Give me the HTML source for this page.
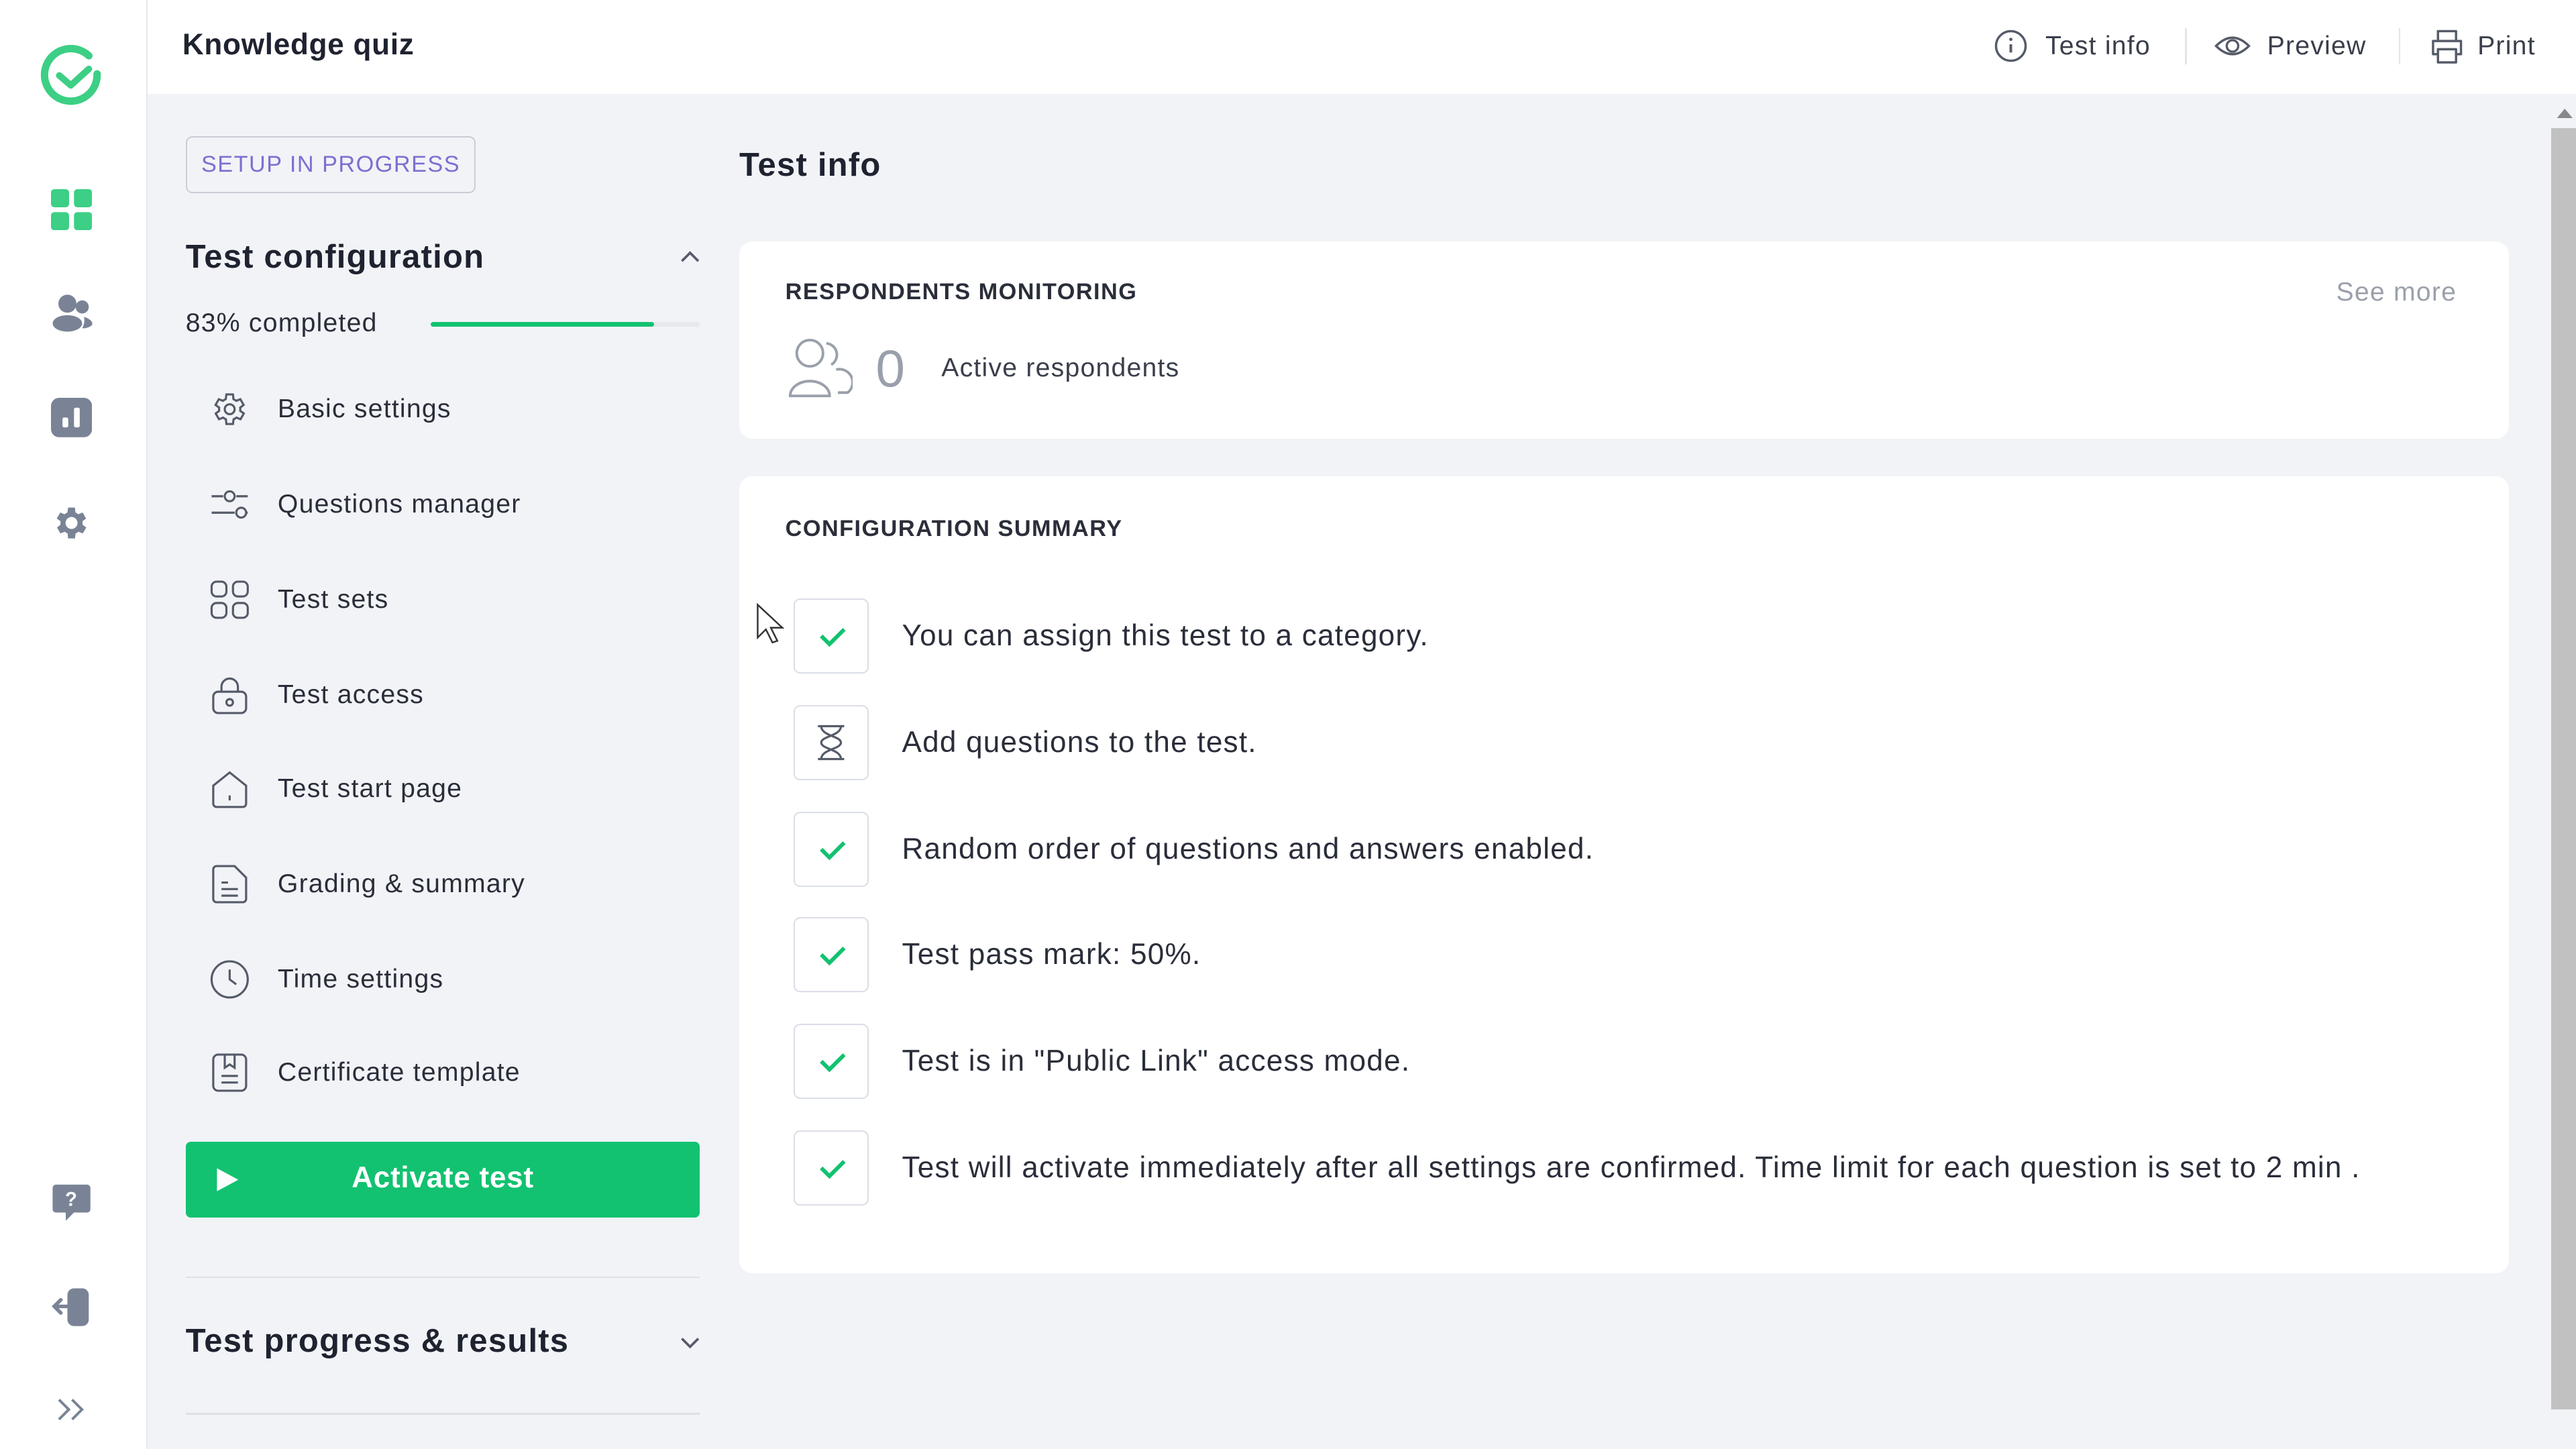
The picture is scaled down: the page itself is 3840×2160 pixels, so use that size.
<!DOCTYPE html>
<html><head><meta charset="utf-8"><style>
html,body{margin:0;padding:0;}
body{width:3840px;height:2159px;overflow:hidden;background:#f1f3f7;font-family:"Liberation Sans",sans-serif;}
#w{width:1568px;height:882px;zoom:2.449;position:relative;background:#f1f3f7;color:#1f2330;letter-spacing:0.5px;}
.a{position:absolute;}
.rail{left:0;top:0;width:89px;height:882px;background:#fff;border-right:1px solid #e6e8ee;}
.top{left:90px;top:0;width:1478px;height:57px;background:#fff;}
.mi{position:absolute;left:169px;font-size:16px;color:#2a2e3a;transform:translateY(-50%);}
.ic{position:absolute;left:128px;width:24px;height:24px;transform:translateY(-50%);}
.card{background:#fff;border-radius:8px;}
.cb{position:absolute;left:483px;width:44px;height:44px;border:1px solid #d9dde5;border-radius:4px;background:#fff;transform:translateY(-50%);}
.rt{position:absolute;left:549px;font-size:18px;color:#2a2e3a;transform:translateY(-50%);white-space:nowrap;}
.h{font-size:14px;font-weight:bold;letter-spacing:0.6px;color:#2a2e3a;}
</style></head><body><div id="w">
<div class="a rail"></div>
<svg class="a" style="left:24px;top:27px" width="40" height="40" viewBox="0 0 40 40"><path d="M30 7 A16 16 0 1 0 35 18" fill="none" stroke="#3dcf85" stroke-width="4.5" stroke-linecap="round"/><path d="M12 19 L19 25 L30 15" fill="none" stroke="#3dcf85" stroke-width="4" stroke-linecap="round" stroke-linejoin="round"/></svg>
<svg class="a" style="left:31px;top:115px" width="25" height="25"><rect x="0" y="0" width="11" height="11" rx="2" fill="#3dcf85"/><rect x="14" y="0" width="11" height="11" rx="2" fill="#3dcf85"/><rect x="0" y="14" width="11" height="11" rx="2" fill="#3dcf85"/><rect x="14" y="14" width="11" height="11" rx="2" fill="#3dcf85"/></svg>
<svg class="a" style="left:31px;top:179px" width="26" height="24"><circle cx="10" cy="6" r="5.5" fill="#7a8396"/><ellipse cx="10" cy="18" rx="9" ry="5" fill="#7a8396"/><circle cx="19" cy="8" r="4" fill="#7a8396"/><path d="M20 14 Q26 16 25 19 Q23 21 19 21 Q21 17 20 14Z" fill="#7a8396"/></svg>
<svg class="a" style="left:31px;top:242px" width="25" height="25"><rect x="0" y="0" width="25" height="24" rx="5" fill="#7a8396"/><rect x="7" y="12" width="3.5" height="6" rx="1" fill="#fff"/><rect x="14" y="6" width="3.5" height="12" rx="1" fill="#fff"/></svg>
<svg class="a" style="left:31px;top:306px" width="25" height="25" viewBox="0 0 24 24"><path fill="#7a8396" d="M19.4 13a7.5 7.5 0 0 0 0-2l2.1-1.6-2-3.5-2.5 1a7 7 0 0 0-1.7-1L15 3h-4l-.4 2.9a7 7 0 0 0-1.7 1l-2.5-1-2 3.5L6.6 11a7.5 7.5 0 0 0 0 2l-2.1 1.6 2 3.5 2.5-1a7 7 0 0 0 1.7 1L11 21h4l.4-2.9a7 7 0 0 0 1.7-1l2.5 1 2-3.5zM13 15.5a3.5 3.5 0 1 1 0-7 3.5 3.5 0 0 1 0 7z" transform="translate(-1 0)"/></svg>
<svg class="a" style="left:31px;top:719px" width="25" height="25"><path d="M3 2h19a2 2 0 0 1 2 2v13a2 2 0 0 1-2 2h-8l-5 5v-5H3a2 2 0 0 1-2-2V4a2 2 0 0 1 2-2z" fill="#7a8396"/><text x="12.5" y="15" font-size="12" font-weight="bold" fill="#fff" text-anchor="middle" font-family="Liberation Sans">?</text></svg>
<svg class="a" style="left:31px;top:783px" width="25" height="25"><rect x="10" y="1" width="13" height="23" rx="4" fill="#7a8396"/><path d="M2 12h12M6 8l-4 4 4 4" stroke="#7a8396" stroke-width="2.2" fill="none" stroke-linecap="round"/></svg>
<svg class="a" style="left:34px;top:851px" width="20" height="14"><path d="M2 1l6 6-6 6M10 1l6 6-6 6" stroke="#7a8396" stroke-width="1.6" fill="none"/></svg>

<div class="a top"></div>
<div class="a" style="left:111px;top:17px;font-size:18px;font-weight:bold;color:#1f2330;letter-spacing:0.3px">Knowledge quiz</div>
<svg class="a" style="left:1214px;top:18px" width="20" height="20"><circle cx="10" cy="10" r="9" fill="none" stroke="#555b68" stroke-width="1.4"/><path d="M10 9v5" stroke="#555b68" stroke-width="1.6"/><circle cx="10" cy="6" r="1" fill="#555b68"/></svg>
<div class="a" style="left:1245px;top:19px;font-size:16px;color:#3a3f4b">Test info</div>
<div class="a" style="left:1330px;top:17px;width:1px;height:22px;background:#e1e4ea"></div>
<svg class="a" style="left:1348px;top:18px" width="22" height="20"><path d="M1 10Q11 0 21 10Q11 20 1 10Z" fill="none" stroke="#555b68" stroke-width="1.4"/><circle cx="11" cy="10" r="3.5" fill="none" stroke="#555b68" stroke-width="1.4"/></svg>
<div class="a" style="left:1380px;top:19px;font-size:16px;color:#3a3f4b">Preview</div>
<div class="a" style="left:1460px;top:17px;width:1px;height:22px;background:#e1e4ea"></div>
<svg class="a" style="left:1479px;top:18px" width="21" height="21"><path d="M5 7V1h11v6M5 15H2V7h17v8h-3M5 12h11v8H5z" fill="none" stroke="#555b68" stroke-width="1.4" stroke-linejoin="round"/></svg>
<div class="a" style="left:1508px;top:19px;font-size:16px;color:#3a3f4b">Print</div>

<div class="a" style="left:113px;top:83px;width:175px;height:33px;border:1px solid #c9cdd6;border-radius:4px;font-size:14px;color:#7d6fd0;letter-spacing:0.6px;line-height:33px;text-align:center">SETUP IN PROGRESS</div>
<div class="a" style="left:113px;top:145px;font-size:20px;font-weight:bold;color:#1f2330">Test configuration</div>
<svg class="a" style="left:414px;top:152px" width="12" height="8"><path d="M1 7l5-5 5 5" stroke="#555b68" stroke-width="1.5" fill="none"/></svg>
<div class="a" style="left:113px;top:188px;font-size:16px;color:#2a2e3a">83% completed</div>
<div class="a" style="left:262px;top:196px;width:164px;height:3px;background:#e6e8ee;border-radius:2px"><div style="width:136px;height:3px;background:#12c270;border-radius:2px"></div></div>

<svg class="ic" style="top:249px" viewBox="0 0 24 24"><path fill="none" stroke="#555b68" stroke-width="1.3" d="M19.4 13a7.5 7.5 0 0 0 0-2l2.1-1.6-2-3.5-2.5 1a7 7 0 0 0-1.7-1L15 3h-4l-.4 2.9a7 7 0 0 0-1.7 1l-2.5-1-2 3.5L6.6 11a7.5 7.5 0 0 0 0 2l-2.1 1.6 2 3.5 2.5-1a7 7 0 0 0 1.7 1L11 21h4l.4-2.9a7 7 0 0 0 1.7-1l2.5 1 2-3.5z" transform="translate(-1 0)"/><circle cx="12" cy="12" r="3" fill="none" stroke="#555b68" stroke-width="1.3"/></svg>
<div class="mi" style="top:249px">Basic settings</div>
<svg class="ic" style="top:307px" viewBox="0 0 24 24" fill="none" stroke="#555b68" stroke-width="1.3"><path d="M1 7h7M16 7h7M1 17h14M22 17h1"/><circle cx="12" cy="7" r="3"/><circle cx="19" cy="17" r="3"/></svg>
<div class="mi" style="top:307px">Questions manager</div>
<svg class="ic" style="top:365px" viewBox="0 0 24 24" fill="none" stroke="#555b68" stroke-width="1.3"><rect x="1" y="1" width="9" height="9" rx="3"/><rect x="14" y="1" width="9" height="9" rx="3"/><rect x="1" y="14" width="9" height="9" rx="3"/><rect x="14" y="14" width="9" height="9" rx="3"/></svg>
<div class="mi" style="top:365px">Test sets</div>
<svg class="ic" style="top:423px" viewBox="0 0 24 24" fill="none" stroke="#555b68" stroke-width="1.3"><rect x="2" y="10" width="20" height="13" rx="3"/><path d="M7 10V7a5 5 0 0 1 10 0v3"/><circle cx="12" cy="16.5" r="2"/></svg>
<div class="mi" style="top:423px">Test access</div>
<svg class="ic" style="top:480px" viewBox="0 0 24 24" fill="none" stroke="#555b68" stroke-width="1.3"><path d="M2 10L12 2l10 8v11a2 2 0 0 1-2 2H4a2 2 0 0 1-2-2z"/><path d="M12 16v3"/></svg>
<div class="mi" style="top:480px">Test start page</div>
<svg class="ic" style="top:538px" viewBox="0 0 24 24" fill="none" stroke="#555b68" stroke-width="1.3"><path d="M15 1H4a2 2 0 0 0-2 2v18a2 2 0 0 0 2 2h16a2 2 0 0 0 2-2V8z"/><path d="M7 11h4M7 15h10M7 19h10"/></svg>
<div class="mi" style="top:538px">Grading &amp; summary</div>
<svg class="ic" style="top:596px" viewBox="0 0 24 24" fill="none" stroke="#555b68" stroke-width="1.3"><circle cx="12" cy="12" r="11"/><path d="M12 6v6l4 3"/></svg>
<div class="mi" style="top:596px">Time settings</div>
<svg class="ic" style="top:653px" viewBox="0 0 24 24" fill="none" stroke="#555b68" stroke-width="1.3"><rect x="2" y="1" width="20" height="22" rx="3"/><path d="M9 1v8l3-2 3 2V1M7 14h10M7 18h10"/></svg>
<div class="mi" style="top:653px">Certificate template</div>

<div class="a" style="left:113px;top:695px;width:313px;height:46px;background:#12c270;border-radius:3px"></div>
<svg class="a" style="left:131px;top:710px" width="15" height="16"><path d="M1 1L14 8L1 15Z" fill="#fff"/></svg>
<div class="a" style="left:113px;top:707px;width:313px;text-align:center;font-size:18px;font-weight:bold;color:#fff;letter-spacing:0.3px">Activate test</div>

<div class="a" style="left:113px;top:777px;width:313px;height:1px;background:#dde0e6"></div>
<div class="a" style="left:113px;top:805px;font-size:20px;font-weight:bold;color:#1f2330">Test progress &amp; results</div>
<svg class="a" style="left:414px;top:814px" width="12" height="8"><path d="M1 1l5 5 5-5" stroke="#555b68" stroke-width="1.5" fill="none"/></svg>
<div class="a" style="left:113px;top:860px;width:313px;height:1px;background:#dde0e6"></div>

<div class="a" style="left:450px;top:89px;font-size:20px;font-weight:bold;color:#1f2330">Test info</div>
<div class="a card" style="left:450px;top:147px;width:1077px;height:120px"></div>
<div class="a h" style="left:478px;top:170px">RESPONDENTS MONITORING</div>
<div class="a" style="left:1422px;top:169px;font-size:16px;color:#9aa0ab">See more</div>
<svg class="a" style="left:479px;top:205px" width="40" height="38" fill="none" stroke="#9aa0ab" stroke-width="1.6"><circle cx="14" cy="10" r="8"/><path d="M2 36a12 9 0 0 1 24 0zM24 4a7 7 0 0 1 3 13M30 20a8 8 0 0 1 7 14h-6"/></svg>
<div class="a" style="left:533px;top:206px;font-size:32px;color:#9aa0ab">0</div>
<div class="a" style="left:573px;top:215px;font-size:16px;color:#3a3f4b">Active respondents</div>

<div class="a card" style="left:450px;top:290px;width:1077px;height:485px"></div>
<div class="a h" style="left:478px;top:314px">CONFIGURATION SUMMARY</div>

<div class="cb" style="top:387px"><svg width="44" height="44"><path d="M16 22l5 5 9-9" stroke="#12c270" stroke-width="2.4" fill="none"/></svg></div>
<div class="rt" style="top:387px">You can assign this test to a category.</div>
<div class="cb" style="top:452px"><svg width="44" height="44" fill="none" stroke="#555b68" stroke-width="1.3"><path d="M14 12h16M14 32h16M16 12c0 6 12 6 12 10s-12 4-12 10M28 12c0 6-12 6-12 10s12 4 12 10"/></svg></div>
<div class="rt" style="top:452px">Add questions to the test.</div>
<div class="cb" style="top:517px"><svg width="44" height="44"><path d="M16 22l5 5 9-9" stroke="#12c270" stroke-width="2.4" fill="none"/></svg></div>
<div class="rt" style="top:517px">Random order of questions and answers enabled.</div>
<div class="cb" style="top:581px"><svg width="44" height="44"><path d="M16 22l5 5 9-9" stroke="#12c270" stroke-width="2.4" fill="none"/></svg></div>
<div class="rt" style="top:581px">Test pass mark: 50%.</div>
<div class="cb" style="top:646px"><svg width="44" height="44"><path d="M16 22l5 5 9-9" stroke="#12c270" stroke-width="2.4" fill="none"/></svg></div>
<div class="rt" style="top:646px">Test is in "Public Link" access mode.</div>
<div class="cb" style="top:711px"><svg width="44" height="44"><path d="M16 22l5 5 9-9" stroke="#12c270" stroke-width="2.4" fill="none"/></svg></div>
<div class="rt" style="top:711px">Test will activate immediately after all settings are confirmed. Time limit for each question is set to 2 min .</div>

<svg class="a" style="left:460px;top:367px" width="18" height="26"><path d="M1 1v20l5-5 4 8 3-1-4-8h7z" fill="#fff" stroke="#333" stroke-width="1"/></svg>

<div class="a" style="left:1552px;top:57px;width:16px;height:825px;background:#f1f3f7"></div>
<svg class="a" style="left:1556px;top:66px" width="10" height="6"><path d="M0 6L5 0L10 6Z" fill="#888"/></svg>
<div class="a" style="left:1553px;top:78px;width:15px;height:780px;background:#c1c1c1"></div>
</div></body></html>
